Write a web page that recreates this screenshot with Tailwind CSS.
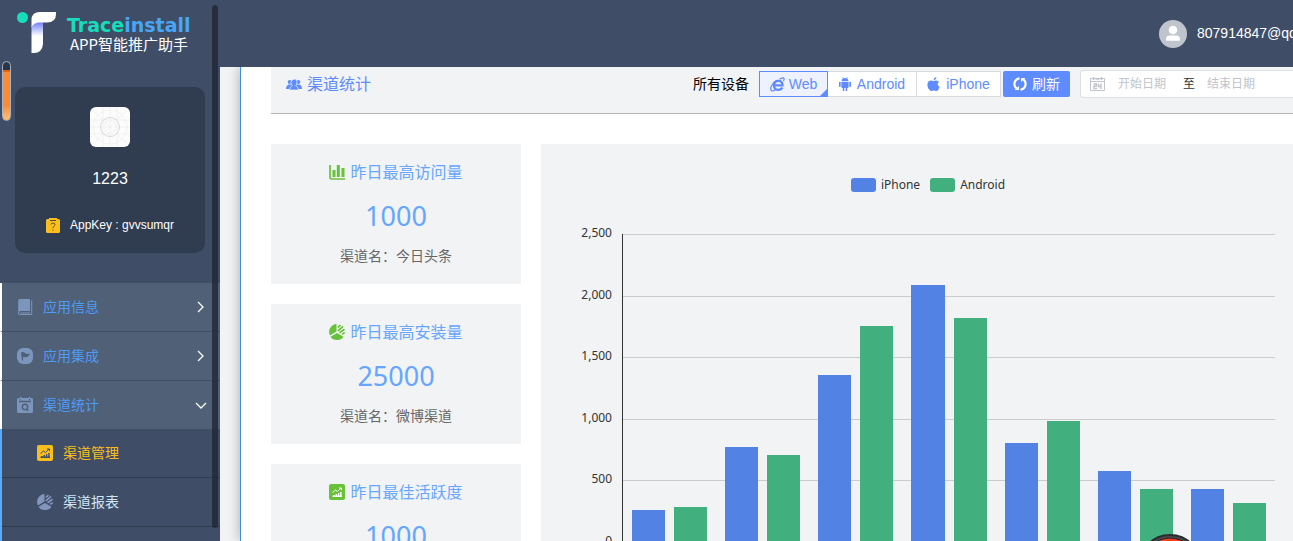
<!DOCTYPE html>
<html lang="zh">
  <head>
    <meta charset="UTF-8" />
    <meta name="viewport" content="width=device-width, initial-scale=1.0" />
    <title>渠道统计 - Traceinstall</title>
    <script src="https://cdn.jsdelivr.net/npm/@tailwindcss/browser@4"></script>
  </head>
  <body
    class="flex h-screen overflow-hidden bg-[#f1f3f5] font-['Liberation_Sans','Noto_Sans_CJK_SC',sans-serif] text-sm"
  >
    <!-- 图标 -->
    <svg class="hidden">
      <symbol id="i-pie" viewBox="0 0 16 16">
        <path d="M7.500 0v7.600L.9 11.500A8 8 0 0 1 7.500 0z" />
        <path d="M8 9l6.500 3.700a8 8 0 0 1-13 0z" />
        <path
          d="M8.800 3.400l2.700-2.300M8.800 6.800l5.300-4.500M10.500 8.700l5-3.500M13 10.200l2.700-1.500"
          fill="none"
          stroke="currentColor"
          stroke-width="1.700"
        />
      </symbol>
      <symbol id="i-trend" viewBox="0 0 16 16">
        <rect width="16" height="16" rx="2" />
        <path d="M3.500 8.500l3-2.500 2 1.500L12 4M10 4h2.500v2.300" fill="none" stroke="var(--mark)" />
        <path
          d="M5 12.500v-1.500M7.300 12.500V10M9.600 12.500V9M11.900 12.500V8M3.500 12.300h9.500"
          fill="none"
          stroke="var(--mark)"
          stroke-width="1.400"
        />
      </symbol>
    </svg>

    <!-- 左侧菜单 -->
    <aside class="relative flex w-[220px] shrink-0 flex-col bg-[#3f4e66]">
      <div class="flex h-[87px] shrink-0 items-start gap-[11px] pt-3 pl-4">
        <svg class="h-[42px] w-10 shrink-0" viewBox="0 0 40 42">
          <defs>
            <linearGradient id="stem" x1="0" y1="0" x2="0" y2="1">
              <stop offset="0" stop-color="#6f7df5" />
              <stop offset="0.450" stop-color="#fff" />
            </linearGradient>
          </defs>
          <circle cx="6.500" cy="5.500" r="5.500" fill="#16ddbb" />
          <path d="M15.500 14c2-3.500 6-4 11.500-4v22q-1 9-9 9h-2.500z" fill="url(#stem)" />
          <path d="M24 0h16v2q0 8.500-9 8.500h-7q-6.500 0-8.500 5V8q0-8 8.500-8z" fill="#fff" />
        </svg>
        <div class="pt-[2px] whitespace-nowrap">
          <h1
            class="font-['DejaVu_Sans',sans-serif] text-[19px] leading-[22px] font-bold text-[#16ddbb]"
          >
            Trace<span class="text-[#48a6f7]">install</span>
          </h1>
          <p
            class="pl-[3px] font-['Noto_Sans_CJK_SC',sans-serif] text-[15px] leading-4 text-white"
          >
            APP智能推广助手
          </p>
        </div>
      </div>

      <section
        class="mx-[15px] flex h-[166px] shrink-0 flex-col items-center rounded-[10px] bg-[#303c4f] pt-5 text-white"
      >
        <svg class="size-10" viewBox="0 0 40 40" fill="none" stroke="#e8e8e8">
          <rect width="40" height="40" rx="6" fill="#fcfcfc" stroke="none" />
          <g stroke-width="0.500">
            <path d="M3 3l34 34M37 3L3 37M20 0v40M0 20h40M0 13h40M0 27h40M13 0v40M27 0v40" />
            <circle cx="20" cy="20" r="17" />
            <circle cx="20" cy="20" r="6" />
          </g>
          <circle cx="20" cy="20" r="9.500" stroke="#d8d8d8" />
        </svg>
        <p class="mt-5 text-base">1223</p>
        <p class="mt-[26px] flex items-center gap-[10px] text-xs">
          <svg class="h-[15px] w-[14px]" viewBox="0 0 14 15">
            <rect y="1" width="14" height="14" rx="1.500" fill="#fbbf1d" />
            <rect x="3" width="8" height="2" fill="#fbbf1d" />
            <path
              d="M4 2.500h6M5 6.500q0-1.500 2-1.500t2 1.500q0 1-1 1.600T7 10M7 11.500v1.200"
              fill="none"
              stroke="#5d5034"
            />
          </svg>
          AppKey : gvvsumqr
        </p>
      </section>

      <nav
        class="mt-[30px] min-h-0 flex-1 overflow-hidden font-['Noto_Sans_CJK_SC',sans-serif] text-[#4f9bf8]"
      >
        <a
          href="#"
          class="flex h-[49px] items-center border-b border-l-2 border-b-[#3f4e66] border-l-white bg-[#506077] pr-[13px] pl-[15px]"
        >
          <svg class="size-4 text-[#7c95bd]" viewBox="0 0 16 16" fill="currentColor">
            <path d="M2.500 0H13v12H3q-1.200 0-1.800.8V1.500Q1.200 0 2.500 0z" />
            <path
              d="M14.700 1.500v14H3q-1.700 0-1.700-1.400T3 12.700M3.500 14h9.500"
              fill="none"
              stroke="currentColor"
            />
          </svg>
          <span class="ml-[10px] pb-0.5">应用信息</span>
          <svg class="ml-auto size-3 text-white" viewBox="0 0 12 12">
            <path d="M3 1l5 5-5 5" fill="none" stroke="currentColor" stroke-width="1.300" />
          </svg>
        </a>
        <a
          href="#"
          class="flex h-[49px] items-center border-b border-l-2 border-b-[#3f4e66] border-l-white bg-[#506077] pr-[13px] pl-[15px]"
        >
          <svg class="size-4" viewBox="0 0 16 16">
            <rect width="16" height="16" rx="6" fill="#7c95bd" />
            <path d="M4 4.500q2.500-1 4 .5t5 .7q-1.500 3.500-4.500 3.600L6 9v3.500H5z" fill="#506077" />
          </svg>
          <span class="ml-[10px] pb-0.5">应用集成</span>
          <svg class="ml-auto size-3 text-white" viewBox="0 0 12 12">
            <path d="M3 1l5 5-5 5" fill="none" stroke="currentColor" stroke-width="1.300" />
          </svg>
        </a>
        <a
          href="#"
          class="flex h-12 items-center border-l-2 border-l-white bg-[#506077] pr-[13px] pl-[15px]"
        >
          <svg class="size-4" viewBox="0 0 16 16">
            <path
              d="M1.500 1H3V0h1.500v1h7V0H13v1h1.500Q16 1 16 2.500v12q0 1.500-1.500 1.500h-13Q0 16 0 14.500v-12Q0 1 1.500 1z"
              fill="#7c95bd"
            />
            <path
              d="M2 4.500h12M9.500 12l1.800 1.800M2.500 2.500h1M12 2.500h1"
              stroke="#506077"
              stroke-width="1.300"
            />
            <circle cx="8" cy="10" r="2.700" fill="none" stroke="#506077" stroke-width="1.500" />
          </svg>
          <span class="ml-[10px] pb-0.5">渠道统计</span>
          <svg class="ml-auto size-3 text-white" viewBox="0 0 12 12">
            <path d="M1 4l5 5 5-5" fill="none" stroke="currentColor" stroke-width="1.300" />
          </svg>
        </a>
        <div class="border-l-2 border-[#5caaf5] pb-4">
          <a
            href="#"
            class="flex h-[49px] items-center gap-[10px] border-b border-[#303c4f] pl-[35px] text-[#fbbf1d]"
          >
            <svg class="size-4 [--mark:#3f4e66]" fill="currentColor">
              <use href="#i-trend" />
            </svg>
            <span class="pb-0.5">渠道管理</span>
          </a>
          <a
            href="#"
            class="flex h-[49px] items-center gap-[10px] border-b border-[#303c4f] pl-[35px] text-[#cfe4f7]"
          >
            <svg class="size-4 text-[#8296bd]" fill="currentColor">
              <use href="#i-pie" />
            </svg>
            <span class="pb-0.5">渠道报表</span>
          </a>
        </div>
      </nav>

      <!-- 滚动条 -->
      <div class="absolute top-[5px] right-[2px] bottom-[13px] w-[6px] rounded-full bg-[#202735]/80"></div>
      <!-- 悬浮进度 -->
      <div
        class="absolute top-[61px] left-[2px] flex h-[60px] w-[9px] flex-col justify-end overflow-hidden rounded-full border border-[#a9b2c0] bg-[#2b3548]"
      >
        <div class="h-[50px] border-t-2 border-[#e8640c] bg-linear-to-b from-[#fb8a32] from-70% to-[#fdc27c]"></div>
      </div>
    </aside>

    <div class="flex min-w-0 flex-1 flex-col">
      <!-- 顶部栏 -->
      <header class="z-10 flex h-[67px] shrink-0 items-center justify-end bg-[#3f4e66] text-white">
        <div class="flex w-[134px] items-center gap-[10px] overflow-hidden whitespace-nowrap">
          <svg class="size-7 shrink-0" viewBox="0 0 28 28">
            <circle cx="14" cy="14" r="14" fill="#c0c4cc" />
            <circle cx="14" cy="10" r="4.300" fill="#fff" />
            <path d="M7 20.800v-1.500q0-3.800 4-3.800h6q4 0 4 3.800v1.500z" fill="#fff" />
          </svg>
          <span class="pb-0.5">807914847@qq.com</span>
        </div>
      </header>

      <main
        class="ml-5 flex min-h-0 flex-1 flex-col border-l border-[#3a8ee6] bg-white pl-[30px] font-['Noto_Sans_CJK_SC',sans-serif] shadow-[0_0_12px_rgba(0,0,0,0.3)]"
      >
        <!-- 标题与筛选 -->
        <div
          class="flex h-[47px] shrink-0 items-start border-b border-[#b3b5b8] bg-[#f1f3f5] pt-[3px] whitespace-nowrap"
        >
          <h2 class="flex h-7 items-center gap-[5px] pl-[15px] text-base text-[#5e8bff]">
            <svg class="h-[11px] w-4" viewBox="0 0 16 11" fill="currentColor">
              <circle cx="3.700" cy="3" r="2" />
              <circle cx="12.300" cy="3" r="2" />
              <path d="M0 10q0-3.500 2.500-4.500h11Q16 6.500 16 10z" />
              <path
                d="M3.500 11q0-3.300 3-4.300Q5 5.500 5 3.200T8 .2t3 3-1.500 3.500q3 1 3 4.300z"
                stroke="#f1f3f5"
                stroke-width="0.700"
              />
            </svg>
            <span class="pb-0.5">渠道统计</span>
          </h2>
          <div class="ml-auto flex h-7 items-center">
            <span class="mr-[10px] pb-0.5 text-black">所有设备</span>
            <div
              class="flex h-[26px] font-['Liberation_Sans',sans-serif] text-[#5e8bff]"
            >
              <button
                type="button"
                class="relative flex w-[69px] items-center justify-center gap-1 border border-[#5e8bff] bg-[#eef2fe]"
              >
                <svg class="size-[15px]" viewBox="0 0 15 15" fill="none" stroke="currentColor">
                  <path
                    d="M4 8.300h8.500Q12.500 3.800 8.300 3.800T4 8.300t4.300 4.500q3 0 4-2.300"
                    stroke-width="2.300"
                  />
                  <path
                    d="M9.500 2.200q4-2.300 4.500-.7.300 1-.5 2.500M5 4.500Q0 9.500.8 12.500q.8 2.800 4.700.3"
                    stroke-width="1.200"
                  />
                </svg>
                Web
                <span
                  class="absolute right-0 bottom-0 size-[7px] bg-[#5e8bff] [clip-path:polygon(100%_0,100%_100%,0_100%)]"
                ></span>
              </button>
              <button
                type="button"
                class="flex w-[89px] items-center justify-center gap-[6px] border border-l-0 border-[#d8dade] bg-white"
              >
                <svg class="h-[14px] w-3" viewBox="0 0 12 14" fill="currentColor">
                  <path d="M2.500 4.300Q2.700 1 6 1t3.500 3.300z" />
                  <path d="M3.500 0l1 1.700M8.500 0l-1 1.700" stroke="currentColor" stroke-width="0.600" />
                  <path
                    d="M2.400 4.900h7.200v5.300q0 .8-.8.800h-.6v3H6.700v-3H5.300v3H3.800v-3h-.6q-.8 0-.8-.8z"
                  />
                  <rect y="4.700" width="1.700" height="5.300" rx="0.800" />
                  <rect x="10.300" y="4.700" width="1.700" height="5.300" rx="0.800" />
                </svg>
                Android
              </button>
              <button
                type="button"
                class="flex w-[84px] items-center justify-center gap-[6px] border border-l-0 border-[#d8dade] bg-white"
              >
                <svg class="h-[14px] w-[13px]" viewBox="0 0 13 14" fill="currentColor">
                  <path d="M6.500 3.300Q6.700.6 9.300 0q.2 2.700-2.800 3.300z" />
                  <path
                    d="M6.500 4.200Q9.500 2.500 12 5q-3 2.500.6 5-1 3-2.800 4-.8.200-1.700-.2-1.300-.6-2.800 0-.8.400-1.500.2Q.5 12 .4 7.800.8 3.500 4.300 3.600q1.200.2 2.200.6z"
                  />
                </svg>
                iPhone
              </button>
            </div>
            <button
              type="button"
              class="ml-[2px] flex h-[26px] w-[67px] items-center justify-center gap-[5px] rounded-[2px] bg-[#5e8bff] text-white"
            >
              <svg class="size-[14px]" viewBox="0 0 14 14">
                <path
                  d="M6.500 1.300A5.700 5.700 0 0 0 3.700 11.500M7.500 12.700A5.700 5.700 0 0 0 10.300 2.500"
                  fill="none"
                  stroke="currentColor"
                  stroke-width="2.200"
                />
                <path d="M1.500 13h4.500V9zM12.500 1H8v4z" fill="currentColor" />
              </svg>
              <span class="pb-0.5">刷新</span>
            </button>
            <div
              class="ml-[10px] flex h-7 w-[213px] items-center overflow-hidden rounded-l border border-r-0 border-[#dcdfe6] bg-white pl-[9px] text-xs"
            >
              <svg class="h-[14px] w-[15px] shrink-0" viewBox="0 0 15 14" fill="none" stroke="#c0c4cc">
                <path d="M.5 1.500h14v12H.5zM.5 4.500h14" />
                <path d="M3.500 0v3M11.500 0v3M5.500 2h4" stroke-width="1.500" />
                <path d="M3.500 7H6.500v2h-2.500v2.500H7M8.500 6.500V9.500h3M11 6.500v5.500" stroke-width="1.400" />
              </svg>
              <input
                type="text"
                aria-label="开始日期"
                placeholder="开始日期"
                class="ml-[13px] w-[50px] pb-0.5 outline-none placeholder:text-[#c0c4cc]"
              />
              <span class="ml-[15px] pb-0.5 text-[#303133]">至</span>
              <input
                type="text"
                aria-label="结束日期"
                placeholder="结束日期"
                class="ml-3 w-[50px] pb-0.5 outline-none placeholder:text-[#c0c4cc]"
              />
            </div>
          </div>
        </div>

        <div class="flex min-h-0 flex-1 gap-5 overflow-hidden pt-[30px]">
          <!-- 数据卡片 -->
          <div class="flex w-[250px] shrink-0 flex-col gap-5 text-center">
            <section class="h-[140px] shrink-0 bg-[#f1f3f5] pt-4">
              <h3 class="flex h-6 items-center justify-center gap-[5px] text-base text-[#66a6ff]">
                <svg class="size-4" viewBox="0 0 16 16" fill="none" stroke="#67c23a">
                  <path d="M1 1v12.500Q1 15 2.500 15H16" stroke-width="1.700" />
                  <path d="M5 6v7M9.300 1v12M14 4v9" stroke-width="3" />
                </svg>
                <span class="pb-0.5">昨日最高访问量</span>
              </h3>
              <p class="mt-3 font-['Noto_Sans',sans-serif] text-[27px] leading-10 text-[#66a6ff]">1000</p>
              <p class="mt-[7px] leading-6 text-[#666]">渠道名：今日头条</p>
            </section>
            <section class="h-[140px] shrink-0 bg-[#f1f3f5] pt-4">
              <h3 class="flex h-6 items-center justify-center gap-[5px] text-base text-[#66a6ff]">
                <svg class="size-4 text-[#67c23a]" fill="currentColor">
                  <use href="#i-pie" />
                </svg>
                <span class="pb-0.5">昨日最高安装量</span>
              </h3>
              <p class="mt-3 font-['Noto_Sans',sans-serif] text-[27px] leading-10 text-[#66a6ff]">25000</p>
              <p class="mt-[7px] leading-6 text-[#666]">渠道名：微博渠道</p>
            </section>
            <section class="h-[140px] shrink-0 bg-[#f1f3f5] pt-4">
              <h3 class="flex h-6 items-center justify-center gap-[5px] text-base text-[#66a6ff]">
                <svg class="size-4 text-[#67c23a] [--mark:#fff]" fill="currentColor">
                  <use href="#i-trend" />
                </svg>
                <span class="pb-0.5">昨日最佳活跃度</span>
              </h3>
              <p class="mt-3 font-['Noto_Sans',sans-serif] text-[27px] leading-10 text-[#66a6ff]">1000</p>
            </section>
          </div>

          <!-- 柱状图 -->
          <section
            class="min-w-0 flex-1 bg-[#f1f3f5] pt-8 pr-[18px] font-['Noto_Sans',sans-serif] text-xs text-[#333]"
          >
            <div class="flex items-center justify-center gap-[10px] pl-10 leading-[18px]">
              <span class="flex items-center gap-[5px]">
                <i class="h-[14px] w-[25px] rounded-[3px] bg-[#5282e4]"></i>iPhone
              </span>
              <span class="flex items-center gap-[5px]">
                <i class="h-[14px] w-[25px] rounded-[3px] bg-[#41b07e]"></i>Android
              </span>
            </div>
            <div class="mt-10 flex h-[308px] gap-[10px]">
              <div class="-mt-[10px] -mb-2 flex w-[71px] flex-col justify-between text-right leading-[18px]">
                <span>2,500</span>
                <span>2,000</span>
                <span>1,500</span>
                <span>1,000</span>
                <span>500</span>
                <span>0</span>
              </div>
              <div class="relative flex-1 border-l border-[#333]">
                <div class="absolute inset-0 flex flex-col">
                  <div class="flex-1 border-t border-[#ccc]"></div>
                  <div class="flex-1 border-t border-[#ccc]"></div>
                  <div class="flex-1 border-t border-[#ccc]"></div>
                  <div class="flex-1 border-t border-[#ccc]"></div>
                  <div class="flex-1 border-t border-[#ccc]"></div>
                </div>
                <div id="bars" class="relative flex h-full"></div>
              </div>
            </div>
          </section>
        </div>
      </main>
    </div>

    <!-- 右下角悬浮按钮 -->
    <button type="button" aria-label="客服" class="fixed right-[91px] -bottom-[57px] size-16">
      <svg viewBox="0 0 64 64">
        <circle cx="32" cy="32" r="31" fill="#4a4c50" stroke="#2b2c2e" stroke-width="2" />
        <circle cx="32" cy="32" r="28" fill="#f43b1f" stroke="#222" />
        <circle cx="32" cy="32" r="25" fill="#2a2a2a" />
      </svg>
    </button>

    <script>
      const max = 2500
      const data = [
        [256, 288],
        [768, 705],
        [1353, 1755],
        [2083, 1820],
        [802, 985],
        [580, 430],
        [430, 320],
      ]
      document.getElementById('bars').innerHTML = data
        .map(
          ([iphone, android]) => `
          <div class="flex flex-1 items-end gap-[9px] px-[9px]">
            <div class="flex-1 bg-[#5282e4]" style="height: ${(iphone / max) * 100}%"></div>
            <div class="flex-1 bg-[#41b07e]" style="height: ${(android / max) * 100}%"></div>
          </div>`
        )
        .join('')
    </script>
  </body>
</html>
